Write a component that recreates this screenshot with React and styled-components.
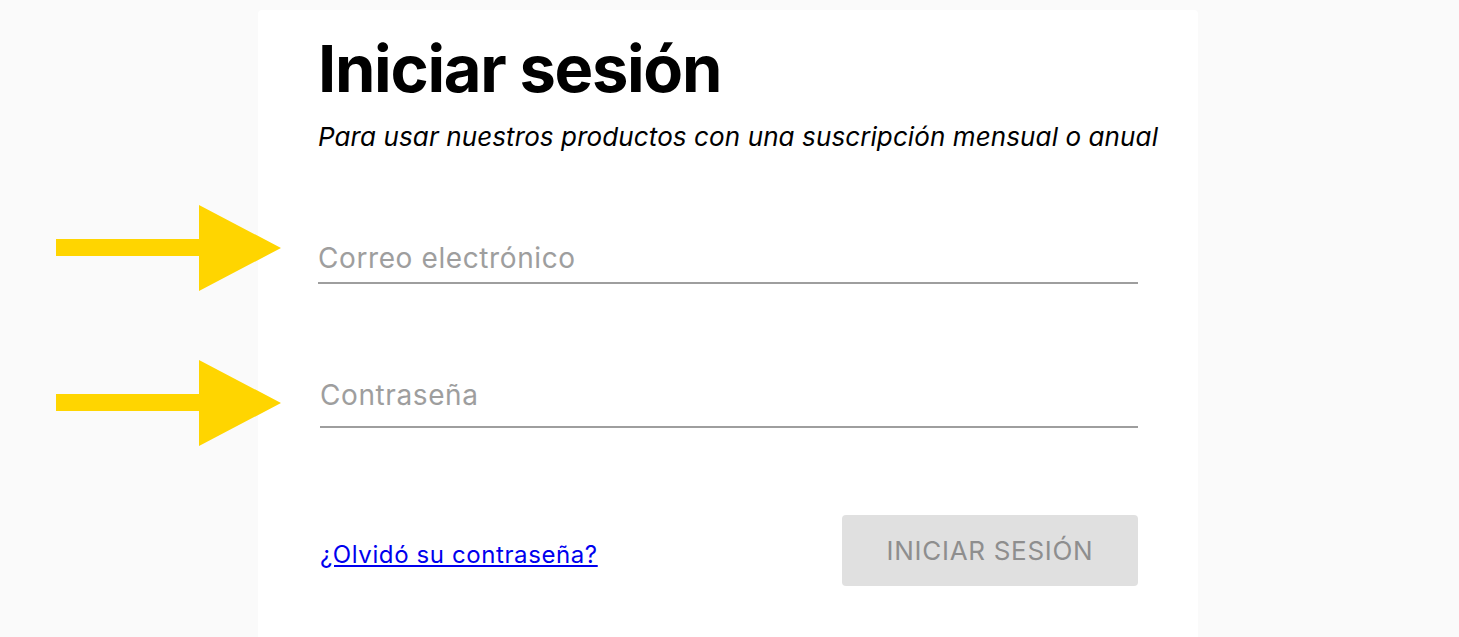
import React from "react";
import styled, { createGlobalStyle } from "styled-components";

const Global = createGlobalStyle`
  html, body { margin: 0; padding: 0; background: #fafafa; }
  body { font-family: Inter, "Noto Sans", sans-serif; overflow: hidden; }
`;

const Page = styled.div`
  position: relative;
  height: 637px;
  padding-top: 10px;
  box-sizing: border-box;
  overflow: hidden;
`;

const Card = styled.div`
  margin-left: 258px;
  width: 940px;
  height: 640px;
  background: #fff;
  border-radius: 4px;
  padding: 19px 60px 0 60px;
  box-sizing: border-box;
`;

const Title = styled.h1`
  margin: 0;
  font-family: Inter, sans-serif;
  font-weight: 700;
  font-size: 65px;
  line-height: 80px;
  color: #000;
  letter-spacing: -1.3px;
`;

const Subtitle = styled.p`
  margin: 13px 0 0 0;
  font-family: Inter, sans-serif;
  font-style: italic;
  font-size: 26px;
  line-height: 30px;
  color: #000;
  white-space: nowrap;
  letter-spacing: 0.1px;
`;

const Form = styled.form`
  display: flex;
  flex-direction: column;
  width: 820px;
  margin-top: 82px;
`;

const Field = styled.input`
  display: block;
  width: ${(p) => (p.$indent ? "818px" : "820px")};
  margin: ${(p) => p.$top || 0}px 0 0 ${(p) => (p.$indent ? "2px" : "0")};
  box-sizing: border-box;
  border: none;
  border-bottom: 2px solid #9e9e9e;
  background: transparent;
  padding: 0 0 ${(p) => p.$pb}px 0;
  height: 50px;
  font-family: Inter, sans-serif;
  font-size: 28px;
  letter-spacing: 0.6px;
  color: #222;
  outline: none;
  &::placeholder { color: #9e9e9e; }
`;

const Actions = styled.div`
  display: flex;
  align-items: center;
  justify-content: space-between;
  margin-top: 87px;
  padding-left: 2px;
`;

const Link = styled.a`
  font-family: Inter, sans-serif;
  font-size: 24px;
  letter-spacing: 0.6px;
  color: #0000ee;
  text-decoration: underline;
  margin-top: 8px;
`;

const Button = styled.button`
  width: 296px;
  height: 71px;
  border: none;
  border-radius: 4px;
  background: #e0e0e0;
  color: #8e8e8e;
  font-family: Inter, sans-serif;
  font-size: 26px;
  letter-spacing: 0.7px;
  text-transform: uppercase;
  padding: 0;
`;

const Arrow = styled.svg`
  position: absolute;
  left: 56px;
  top: ${(p) => p.$top}px;
  width: 226px;
  height: 86px;
`;

const ArrowShape = ({ top }) => (
  <Arrow $top={top} viewBox="0 0 226 86">
    <polygon
      points="0,34 143,34 143,0 225,43 143,86 143,51 0,51"
      fill="#ffd500"
    />
  </Arrow>
);

export default function App() {
  return (
    <>
      <Global />
      <Page>
        <Card>
          <Title>Iniciar sesión</Title>
          <Subtitle>Para usar nuestros productos con una suscripción mensual o anual</Subtitle>
          <Form onSubmit={(e) => e.preventDefault()}>
            <Field $pb={1} type="email" placeholder="Correo electrónico" />
            <Field $indent $top={94} $pb={15} type="password" placeholder="Contraseña" />
            <Actions>
              <Link href="#">¿Olvidó su contraseña?</Link>
              <Button type="submit">Iniciar sesión</Button>
            </Actions>
          </Form>
        </Card>
        <ArrowShape top={205} />
        <ArrowShape top={360} />
      </Page>
    </>
  );
}
